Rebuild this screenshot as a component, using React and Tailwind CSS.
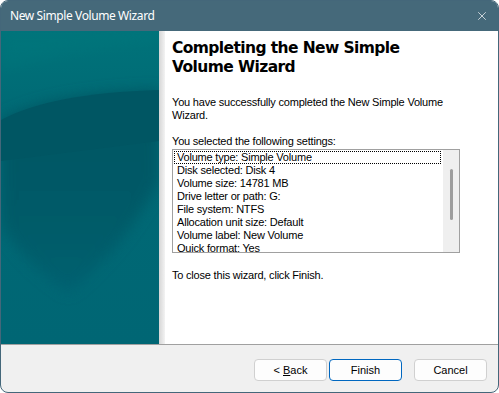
import { X } from 'lucide-react';

const settings = [
  'Volume type: Simple Volume',
  'Disk selected: Disk 4',
  'Volume size: 14781 MB',
  'Drive letter or path: G:',
  'File system: NTFS',
  'Allocation unit size: Default',
  'Volume label: New Volume',
  'Quick format: Yes',
];

const sans = { fontFamily: '"Liberation Sans", Arial, sans-serif' };

const WizardArt = () => (
  <svg width="158" height="313" viewBox="0 0 158 313" className="block">
    <defs>
      <linearGradient id="base" x1="0" y1="0" x2="0" y2="1">
        <stop offset="0" stopColor="#00737a" />
        <stop offset="0.25" stopColor="#006a75" />
        <stop offset="1" stopColor="#006674" />
      </linearGradient>
      <linearGradient id="dark" x1="0" y1="0" x2="0" y2="1">
        <stop offset="0" stopColor="#005663" />
        <stop offset="0.6" stopColor="#005a67" />
        <stop offset="1" stopColor="#006070" />
      </linearGradient>
      <filter id="soft" x="-20%" y="-20%" width="140%" height="140%">
        <feGaussianBlur stdDeviation="7" />
      </filter>
    </defs>
    <rect width="158" height="313" fill="url(#base)" />
    <path d="M0,40 Q60,20 158,10 L158,0 L0,0 Z" fill="#007a7e" opacity="0.35" filter="url(#soft)" />
    <path
      d="M0,89 Q50,62 158,59 L158,150 Q125,215 68,262 Q25,235 0,195 Z"
      fill="url(#dark)"
      filter="url(#soft)"
    />
    <path d="M0,89 Q50,62 158,59 L158,110 L0,130 Z" fill="#005663" />
  </svg>
);

const Button = ({ children, primary }) => (
  <button
    className={
      primary
        ? 'w-[73px] h-[22px] rounded-[4px] border border-[#0067c0] bg-[#fdfdfd] text-[11px] text-black'
        : 'w-[73px] h-[22px] rounded-[4px] border border-[#d0d0d0] bg-[#fdfdfd] text-[11px] text-black'
    }
    style={sans}
  >
    {children}
  </button>
);

export default function App() {
  return (
    <div className="w-[499px] h-[393px] bg-white">
      <div className="w-full h-full rounded-[8px] border border-[#44677a] overflow-hidden flex flex-col bg-[#f0f0f0]">
        {/* title bar */}
        <div className="h-[30px] bg-[#45697a] flex items-center justify-between pl-[9px] pr-[9px]">
          <span
            className="text-[12px] tracking-[-0.4px] text-white"
            style={{ fontFamily: '"Segoe UI", "Noto Sans", sans-serif' }}
          >
            New Simple Volume Wizard
          </span>
          <X size={14} strokeWidth={1.2} className="text-white" />
        </div>

        {/* body */}
        <div className="h-[314px] flex border-b border-[#a0a0a0]">
          <WizardArt />
          <div className="w-[6px] bg-gradient-to-r from-[#d6d6d6] to-[#f3f3f3]" />
          <div className="flex-1 bg-white pl-[7px] pt-[8px] text-black">
            <h1
              className="text-[15.5px] font-bold leading-[19px] tracking-[-0.6px] w-[270px]"
              style={{ fontFamily: 'Verdana, "DejaVu Sans", sans-serif' }}
            >
              Completing the New Simple Volume Wizard
            </h1>
            <p className="mt-[19px] text-[11px] leading-[13px] tracking-[-0.2px] w-[280px]" style={sans}>
              You have successfully completed the New Simple Volume Wizard.
            </p>
            <p className="mt-[13px] text-[11px] leading-[13px] tracking-[-0.2px]" style={sans}>
              You selected the following settings:
            </p>
            <div className="mt-[1px] w-[288px] h-[104px] border border-[#a0a0a0] flex overflow-hidden">
              <div className="flex-1 pl-[1px] pt-[1px]">
                {settings.map((s, i) => (
                  <div
                    key={s}
                    className={
                      i === 0
                        ? 'h-[13px] leading-[13px] text-[11px] tracking-[-0.2px] pl-[2px] mr-[2px] border border-dotted border-black'
                        : 'h-[13px] leading-[13px] text-[11px] tracking-[-0.2px] pl-[3px]'
                    }
                    style={sans}
                  >
                    <span className={i === 0 ? 'relative -top-[1px]' : ''}>{s}</span>
                  </div>
                ))}
              </div>
              <div className="w-[16px] bg-[#efefef] flex justify-center pt-[19px]">
                <div className="w-[3px] h-[51px] rounded-full bg-[#9d9d9d]" />
              </div>
            </div>
            <p className="mt-[16px] text-[11px] leading-[13px] tracking-[-0.2px]" style={sans}>
              To close this wizard, click Finish.
            </p>
          </div>
        </div>

        {/* footer */}
        <div className="flex-1 flex items-start justify-end pt-[14px] pr-[11px]">
          <Button>
            &lt; <span className="underline">B</span>ack
          </Button>
          <div className="w-[2px]" />
          <Button primary>Finish</Button>
          <div className="w-[12px]" />
          <Button>Cancel</Button>
        </div>
      </div>
    </div>
  );
}
